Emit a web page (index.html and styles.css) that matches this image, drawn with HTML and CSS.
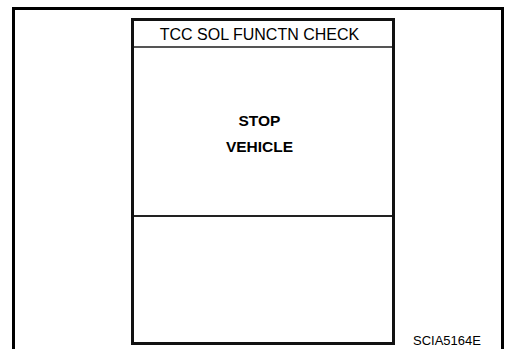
FILE: index.html
```html
<!DOCTYPE html>
<html>
<head>
<meta charset="utf-8">
<link rel="stylesheet" href="styles.css">
</head>
<body>
<div class="frame">
  <div class="screen">
    <div class="screen-title">TCC SOL FUNCTN CHECK</div>
    <div class="screen-msg">
      <div class="msg-line">STOP</div>
      <div class="msg-line">VEHICLE</div>
    </div>
    <div class="screen-empty"></div>
  </div>
  <div class="code">SCIA5164E</div>
</div>
</body>
</html>
```
FILE: styles.css
```css
html, body {
  margin: 0;
  padding: 0;
  background: #fff;
  height: 349px;
  overflow: hidden;
}
body {
  font-family: "Liberation Sans", Arial, sans-serif;
  color: #000;
  padding-top: 7px;
  padding-left: 12px;
  box-sizing: border-box;
}
.frame {
  width: 492px;
  height: 342px;
  box-sizing: border-box;
  border: 3px solid #000;
  border-bottom: none;
  display: flex;
  align-items: flex-end;
  padding: 8px 0 4px 116px;
}
.screen {
  width: 264px;
  height: 327px;
  box-sizing: border-box;
  border: 3px solid #111;
  display: flex;
  flex-direction: column;
}
.screen-title {
  height: 27px;
  box-sizing: border-box;
  padding: 1px 7px 0 0;
  line-height: 26px;
  font-size: 16px;
  text-align: center;
  border-bottom: 2px solid #555;
  white-space: nowrap;
}
.screen-msg {
  height: 169px;
  box-sizing: border-box;
  padding: 60px 7px 0 0;
  border-bottom: 2px solid #222;
  text-align: center;
  font-weight: bold;
  font-size: 15.5px;
  line-height: 26px;
}
.screen-empty {
  flex: 1;
}
.code {
  margin-left: 18px;
  margin-bottom: -3px;
  font-size: 13px;
  line-height: 15px;
  white-space: nowrap;
}
```
